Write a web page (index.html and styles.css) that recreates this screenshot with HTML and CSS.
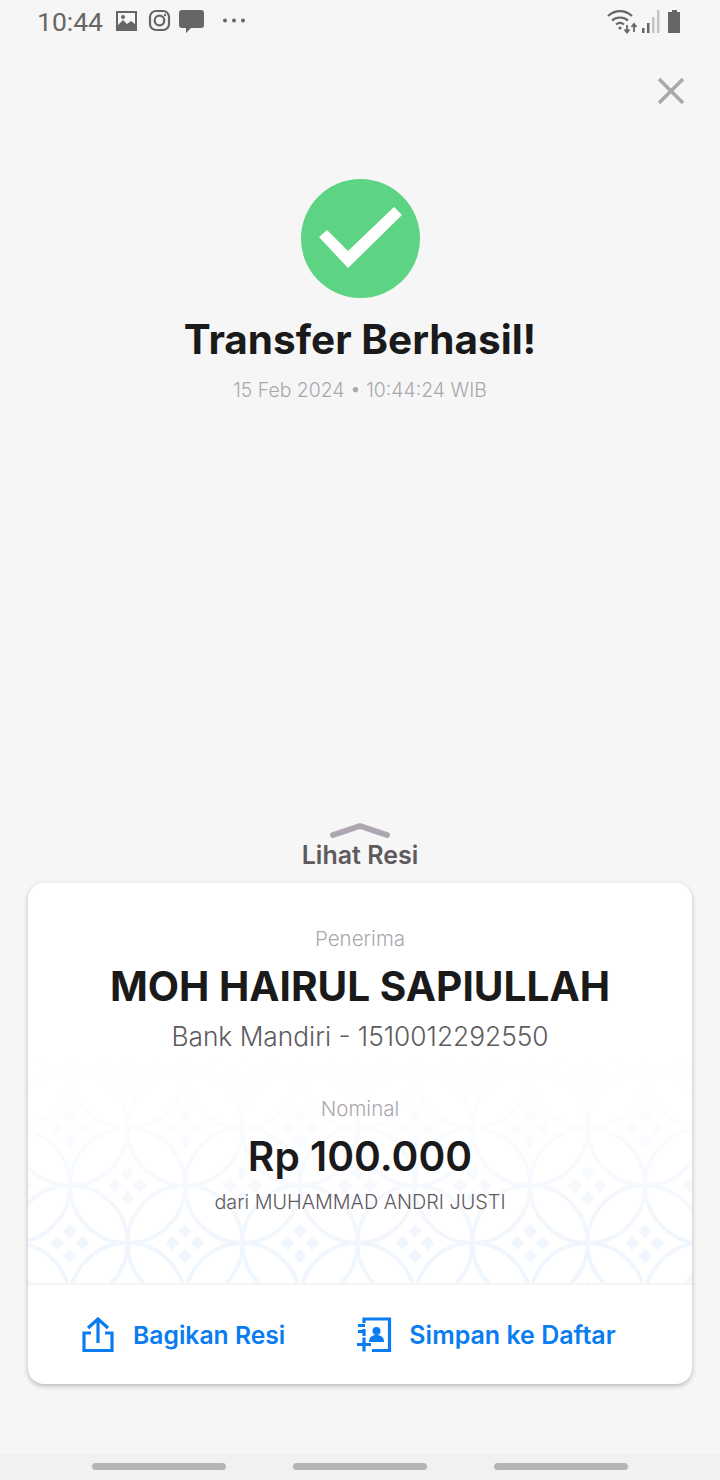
FILE: index.html
```html
<!DOCTYPE html>
<html>
<head>
  <title>Transfer Berhasil</title>
  <link rel="stylesheet" href="styles.css">
</head>
<body>
  <div class="page">
    <!-- status bar -->
    <div class="status-bar">
      <span class="clock">10:44</span>
      <svg class="notif-icons" width="132" height="26" viewBox="0 0 132 26">
        <path fill="#666" fill-rule="evenodd" d="M1 3h21v20H1zM3 5v12l5-5 4 4 4-3 4 3V5zM8 7a2 2 0 1 1 0 4 2 2 0 0 1 0-4z"/>
        <rect x="35" y="3" width="19" height="19" rx="6" fill="none" stroke="#666" stroke-width="2.2"/>
        <circle cx="44.500" cy="12.500" r="4.800" fill="none" stroke="#666" stroke-width="2.2"/>
        <circle cx="50" cy="7" r="1.200" fill="#666"/>
        <path fill="#666" d="M67 2h19a3 3 0 0 1 3 3v12a3 3 0 0 1-3 3H76l-5 5v-5h-4a3 3 0 0 1-3-3V5a3 3 0 0 1 3-3z"/>
        <circle cx="110" cy="12.500" r="2" fill="#666"/>
        <circle cx="119" cy="12.500" r="2" fill="#666"/>
        <circle cx="128" cy="12.500" r="2" fill="#666"/>
      </svg>
      <svg class="sys-icons" width="78" height="26" viewBox="0 0 78 26">
        <path d="M2 8c7-6.500 17-6.500 24 0M6 12.500c4.500-4 11.500-4 16 0M10 16.500c2.500-2 5.500-2 8 0" fill="none" stroke="#666" stroke-width="2.2"/>
        <circle cx="14" cy="20" r="1.600" fill="#666"/>
        <path d="M21 17v7M18.500 21.500l2.500 3 2.500-3M28 24v-7M25.500 19l2.500-3 2.500 3" fill="none" stroke="#666" stroke-width="1.800"/>
        <rect x="36" y="20" width="2.500" height="5" fill="#666"/>
        <rect x="41" y="15" width="2.500" height="10" fill="#666"/>
        <rect x="46" y="9" width="2.500" height="16" fill="#c4c4c4"/>
        <rect x="51" y="2" width="2.500" height="23" fill="#c4c4c4"/>
        <path fill="#666" d="M66 2h5v2h3v21H62V4h4z"/>
      </svg>
    </div>

    <div class="close-row">
      <svg width="28" height="28" viewBox="0 0 28 28">
        <path d="M2 2l24 24M26 2L2 26" stroke="#aca6ae" stroke-width="3.400" fill="none"/>
      </svg>
    </div>

    <!-- result -->
    <div class="result">
      <svg class="check" width="119" height="119" viewBox="0 0 119 119">
        <circle cx="59.500" cy="59.500" r="59.500" fill="#5dd384"/>
        <path fill="#fff" d="M18 58l8-7 21 21 46-44 8 8-54 53z"/>
      </svg>
      <h1 class="title">Transfer Berhasil!</h1>
      <div class="date">15 Feb 2024 • 10:44:24 WIB</div>
    </div>

    <div class="spacer"></div>

    <div class="handle">
      <svg width="60" height="16" viewBox="0 0 60 16">
        <path d="M3 12L30 3l27 9" fill="none" stroke="#aea7b1" stroke-width="6" stroke-linecap="round" stroke-linejoin="round"/>
      </svg>
      <span class="handle-label">Lihat Resi</span>
    </div>

    <!-- receipt card -->
    <div class="card">
      <div class="card-body">
        <svg class="batik" width="664" height="224" viewBox="0 0 664 224">
          <defs>
            <pattern id="kawung" width="115" height="115" patternUnits="userSpaceOnUse" patternTransform="translate(42 69)">
              <g fill="none" stroke="#f0f6fd" stroke-width="4">
                <circle cx="0" cy="0" r="57.500"/>
                <circle cx="115" cy="0" r="57.500"/>
                <circle cx="0" cy="115" r="57.500"/>
                <circle cx="115" cy="115" r="57.500"/>
                <circle cx="57.500" cy="57.500" r="57.500"/>
              </g>
              <g fill="#f0f6fd">
                <path d="M57.500 38l7 7-7 7-7-7zM57.500 63l7 7-7 7-7-7zM45 50.500l7 7-7 7-7-7zM70 50.500l7 7-7 7-7-7z"/>
                <path d="M0-19l7 7-7 7-7-7zM0 6l7 7-7 7-7-7zM-12.500-7l7 7-7 7-7-7zM12.500-7l7 7-7 7-7-7z"/>
                <path d="M115-19l7 7-7 7-7-7zM115 6l7 7-7 7-7-7zM102.500-7l7 7-7 7-7-7zM127.500-7l7 7-7 7-7-7z"/>
                <path d="M0 96l7 7-7 7-7-7zM0 121l7 7-7 7-7-7zM-12.500 108l7 7-7 7-7-7zM12.500 108l7 7-7 7-7-7z"/>
                <path d="M115 96l7 7-7 7-7-7zM115 121l7 7-7 7-7-7zM102.500 108l7 7-7 7-7-7zM127.500 108l7 7-7 7-7-7z"/>
              </g>
            </pattern>
            <linearGradient id="fade" x1="0" y1="0" x2="0" y2="1">
              <stop offset="0" stop-color="#fff" stop-opacity="1"/>
              <stop offset="0.45" stop-color="#fff" stop-opacity="0.5"/>
              <stop offset="0.85" stop-color="#fff" stop-opacity="0"/>
            </linearGradient>
          </defs>
          <rect width="664" height="224" fill="url(#kawung)"/>
          <rect width="664" height="224" fill="url(#fade)"/>
        </svg>
        <div class="label">Penerima</div>
        <div class="name">MOH HAIRUL SAPIULLAH</div>
        <div class="bank">Bank Mandiri - 1510012292550</div>
        <div class="label nominal-label">Nominal</div>
        <div class="amount">Rp 100.000</div>
        <div class="sender">dari MUHAMMAD ANDRI JUSTI</div>
      </div>
      <div class="card-actions">
        <div class="action">
          <svg width="34" height="36" viewBox="0 0 34 36">
            <path d="M10 16H3v17.500h28V16h-7M17 26V3M7 11l10-9 10 9" fill="none" stroke="#0a7cf2" stroke-width="3.200"/>
          </svg>
          <span>Bagikan Resi</span>
        </div>
        <div class="action action-save">
          <svg width="36" height="36" viewBox="0 0 36 36">
            <path d="M8 6V2h25.500v31.500H16M8 12v7" fill="none" stroke="#0a7cf2" stroke-width="3.200"/>
            <path d="M2 8.500h7M2 14.500h7M1 27.500h14M8 20.500v14" fill="none" stroke="#0a7cf2" stroke-width="3.200"/>
            <circle cx="20.500" cy="14" r="4" fill="#0a7cf2"/>
            <path fill="#0a7cf2" d="M13 25c0-5 3-7 7.500-7s7.500 2 7.500 7z"/>
          </svg>
          <span>Simpan ke Daftar</span>
        </div>
      </div>
    </div>

    <div class="nav-bar">
      <div class="nav-pill"></div>
      <div class="nav-pill"></div>
      <div class="nav-pill"></div>
    </div>
  </div>
</body>
</html>
```

FILE: styles.css
```css
* {
  box-sizing: border-box;
}

body {
  margin: 0;
  background: #f6f6f6;
  font-family: Inter, "Liberation Sans", sans-serif;
}

.page {
  width: 720px;
  height: 1480px;
  display: flex;
  flex-direction: column;
  overflow: hidden;
}

.status-bar {
  height: 42px;
  display: flex;
  align-items: center;
  padding: 0 36px 0 37px;
  color: #666;
}

.clock {
  font-family: Roboto, sans-serif;
  font-size: 26.500px;
  width: 78px;
}

.sys-icons {
  margin-left: auto;
}

.close-row {
  display: flex;
  justify-content: flex-end;
  padding: 35px 35px 0 0;
}

.result {
  display: flex;
  flex-direction: column;
  align-items: center;
  margin-top: 74px;
}

.title {
  margin: 17px 0 0;
  font-size: 40.500px;
  line-height: 50px;
  font-weight: 700;
  color: #1a1a1a;
}

.date {
  margin-top: 12px;
  font-size: 19.400px;
  line-height: 26px;
  font-weight: 300;
  color: #aca6ae;
}

.spacer {
  flex: 1;
}

.handle {
  display: flex;
  flex-direction: column;
  align-items: center;
}

.handle-label {
  font-size: 25px;
  line-height: 32px;
  font-weight: 600;
  color: #5e5a5e;
}

.card {
  margin: 12px 28px 70px;
  height: 501px;
  background: #fff;
  border-radius: 16px;
  box-shadow: 0 2px 5px rgba(0, 0, 0, 0.25);
  display: flex;
  flex-direction: column;
}

.card-body {
  position: relative;
  height: 402px;
  padding-top: 42px;
  text-align: center;
  border-bottom: 2px solid #f5f5f5;
}

.card-body div {
  position: relative;
}

.batik {
  position: absolute;
  left: 0;
  bottom: 0;
}

.label {
  font-size: 20.500px;
  line-height: 28px;
  font-weight: 300;
  color: #aca6ae;
}

.name {
  margin-top: 9px;
  font-size: 40.600px;
  line-height: 50px;
  font-weight: 700;
  color: #1a1a1a;
}

.bank {
  margin-top: 7px;
  font-size: 26.300px;
  line-height: 36px;
  font-weight: 300;
  color: #5e5a5e;
}

.nominal-label {
  margin-top: 40px;
}

.amount {
  margin-top: 9px;
  font-size: 40.700px;
  line-height: 50px;
  font-weight: 600;
  color: #1a1a1a;
}

.sender {
  margin-top: 6px;
  font-size: 19.800px;
  line-height: 28px;
  font-weight: 300;
  color: #5e5a5e;
}

.card-actions {
  flex: 1;
  display: flex;
  align-items: center;
  padding-left: 53px;
}

.action {
  display: flex;
  align-items: center;
  gap: 18px;
  font-size: 24.700px;
  line-height: 36px;
  font-weight: 600;
  color: #0a7cf2;
}

.action-save {
  margin-left: 71px;
  gap: 17px;
  font-size: 25px;
}

.nav-bar {
  height: 26px;
  background: #f1f1f1;
  display: flex;
  justify-content: center;
  gap: 67px;
  padding-top: 9px;
}

.nav-pill {
  width: 134px;
  height: 7px;
  border-radius: 4px;
  background: #b5b5b5;
}
```
